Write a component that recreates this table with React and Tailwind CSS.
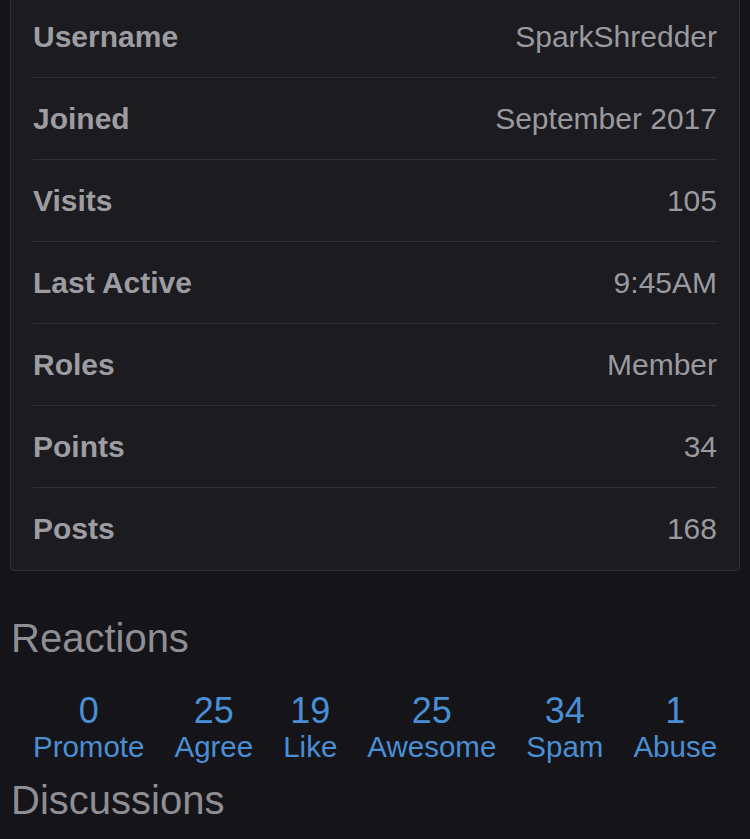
// Profile stats — member info table with reaction counts
import React from 'react';

const stats = [
  { label: 'Username', value: 'SparkShredder' },
  { label: 'Joined', value: 'September 2017' },
  { label: 'Visits', value: '105' },
  { label: 'Last Active', value: '9:45AM' },
  { label: 'Roles', value: 'Member' },
  { label: 'Points', value: '34' },
  { label: 'Posts', value: '168' },
];

const reactions = [
  { label: 'Promote', count: 0 },
  { label: 'Agree', count: 25 },
  { label: 'Like', count: 19 },
  { label: 'Awesome', count: 25 },
  { label: 'Spam', count: 34 },
  { label: 'Abuse', count: 1 },
];

const App = () => {
  return (
    <div
      className="min-h-[839px] w-[750px] overflow-hidden bg-[#141419] pb-10"
      style={{ fontFamily: '"Liberation Sans", Arial, sans-serif' }}
    >
      {/* ── Info card ── */}
      <div className="mx-[10px] -mt-[5px] rounded-[4px] border border-[#2f2f34] bg-[#1b1b20] px-[22px]">
        {stats.map(({ label, value }, i) => (
          <div
            key={label}
            className={`flex h-[82px] items-center justify-between ${
              i < stats.length - 1 ? 'border-b border-[#2f2f34]' : ''
            }`}
          >
            <span className="text-[30px] font-bold leading-none text-[#9d9da1]">{label}</span>
            <span className="text-[30px] leading-none text-[#9a9a9e]">{value}</span>
          </div>
        ))}
      </div>

      {/* ── Reactions ── */}
      <h2 className="ml-[11px] mt-[47px] text-[40px] font-normal leading-none text-[#8e8e93]">Reactions</h2>
      <div className="mt-[35px] flex justify-center gap-[30px] text-[#4a8fd4]">
        {reactions.map(({ label, count }) => (
          <div key={label} className="flex flex-col items-center">
            <span className="text-[36px] leading-none">{count}</span>
            <span className="mt-[3px] text-[29.5px] leading-none">{label}</span>
          </div>
        ))}
      </div>

      <h2 className="ml-[11px] mt-[18px] text-[40px] font-normal leading-none text-[#8e8e93]">Discussions</h2>
    </div>
  );
};

export default App;
